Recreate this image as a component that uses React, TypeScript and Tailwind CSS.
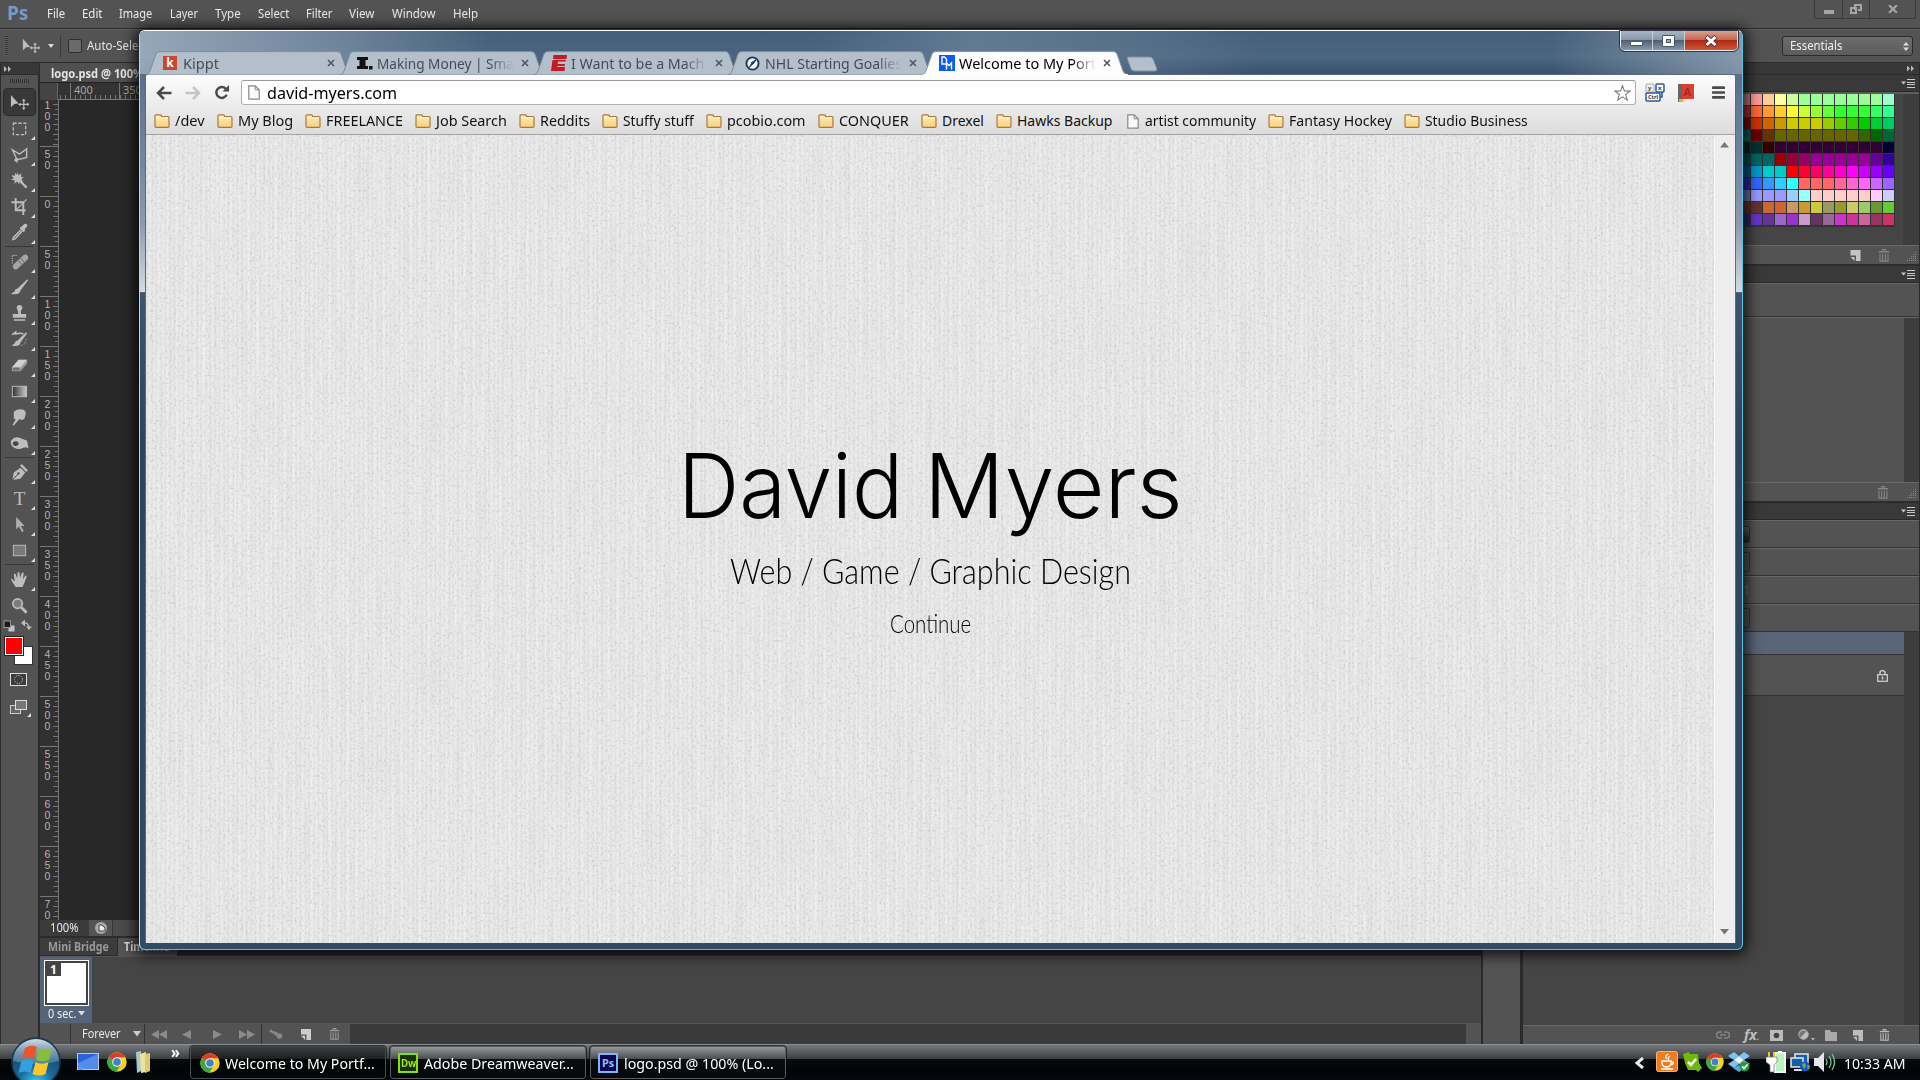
import React, { useLayoutEffect, useRef, useState } from "react";

/* Text squeezed or stretched horizontally to an exact width. */
function Fit({ w, className = "", children }: { w: number; className?: string; children: React.ReactNode }) {
  const ref = useRef<HTMLSpanElement>(null);
  const [s, setS] = useState(1);
  useLayoutEffect(() => {
    if (ref.current) setS(w / ref.current.offsetWidth);
  }, [w]);
  return (
    <span className={`block shrink-0 whitespace-nowrap ${className}`} style={{ width: w }}>
      <span ref={ref} className="inline-block origin-left" style={{ transform: `scaleX(${s})` }}>
        {children}
      </span>
    </span>
  );
}

const Chrome = ({ className = "" }: { className?: string }) => (
  <svg viewBox="0 0 20 20" className={className}>
    <circle cx="10" cy="10" r="9.7" fill="#f7d21b" />
    <path d="M10 10 L1.6 5.2 A9.7 9.7 0 0 0 9.4 19.7 L14 12.4Z" fill="#3fa648" />
    <path d="M10 10 L1.6 5.2 A9.7 9.7 0 0 1 18.4 5.3 L10 5.3Z" fill="#dd3b2c" />
    <circle cx="10" cy="10" r="4.8" fill="#f5f5f5" />
    <circle cx="10" cy="10" r="3.8" fill="#4380c8" />
  </svg>
);

const Trash = ({ className = "" }: { className?: string }) => (
  <svg viewBox="0 0 12 14" className={className} fill="none" stroke="currentColor">
    <path d="M4.500 2V.700h3V2M.500 3h11" strokeWidth="1.500" />
    <path d="M1.700 5v8h8.600V5M4.500 5v7.500M7.500 5v7.500" strokeWidth="1.200" />
  </svg>
);
const NewPage = ({ className = "" }: { className?: string }) => (
  <svg viewBox="0 0 11 12" className={className} fill="currentColor">
    <path d="M0 0h11v12H6V6H0z M0 7.5h4.5V12z" />
  </svg>
);
const PanelMenu = () => (
  <svg viewBox="0 0 14 9" className="h-[9px] w-[14px]">
    <path d="M0 2.5h5L2.500 5.500z" fill="#c9c9c9" />
    <path d="M6 .500h8M6 3.500h8M6 5.500h8M6 8.500h8" stroke="#c9c9c9" strokeWidth="1" />
  </svg>
);
const Grip = () => (
  <svg viewBox="0 0 10 10" className="h-[10px] w-[10px]" fill="#858585">
    {[0, 1, 2, 3, 4].map((r) =>
      Array.from({ length: r + 1 }, (_, c) => <rect key={`${r}-${c}`} x={8 - c * 2} y={r * 2} width="1" height="1" />)
    )}
  </svg>
);

/* ---------- Photoshop tool glyphs, 20x20 ---------- */
const G = "#bdbdbd";
const tools: Record<string, React.ReactNode> = {
  move: (<><path d="M1 2v13l3.500-3.500L9 11z" fill={G} /><path d="M14.500 7v10M9.500 12h10" stroke={G} strokeWidth="1.300" /><path d="M12.500 8.500l2-2.500 2 2.500zM12.500 15.500l2 2.500 2-2.500zM11 10l-2.500 2 2.500 2zM18 10l2.500 2-2.500 2z" fill={G} /></>),
  marquee: <rect x="3.500" y="4.500" width="13" height="12" fill="none" stroke={G} strokeWidth="1.400" strokeDasharray="3.500 1.800" />,
  lasso: <path d="M7.500 15.500L2.500 5l7.500 4.500L17.500 4v9l-9.500 2.500q-1.500-2-2.500 0t2.500 0l-1 3" fill="none" stroke={G} strokeWidth="1.500" />,
  wand: (<><path d="M8 1l1 3.500 3-2-.5 3.500 3 .5-2.500 2 2 3-3.500-1-1 3.500-2-3-3 2.500.5-3.500L1 9l3-1.500-2.500-3 3.500.5.500-3 2 2z" fill={G} /><path d="M10.500 10.500l7 7" stroke={G} strokeWidth="2.300" /></>),
  crop: (<><path d="M6 1v13h10.500M1.500 5.500H14V19" stroke={G} strokeWidth="2" fill="none" /><path d="M6 14L17.500 2.500" stroke={G} strokeWidth="1.200" /></>),
  pipette: (<><path d="M11.500 7l-8 8.500-.5 2 2-.5L13 8.500" fill="none" stroke={G} strokeWidth="1.500" /><path d="M10 5l2-1 3-3q3-1 3.500 2l-3 3.500.5 2-2 1z" fill={G} /></>),
  heal: (<><path d="M7 3.500H2.500v9" fill="none" stroke={G} strokeWidth="1.200" strokeDasharray="1.200 1.200" /><path d="M4 13L14 3.500q3-2 4.500.5t-.5 4.500L8 17.500q-3 2-4.500-.5T4 13z" fill="#a5a5a5" /><path d="M8 8.500l5 5M11 6l4 5" stroke="#666" /></>),
  brush: (<><path d="M18.500 2L9 11l1.500 1.500L18.500 2z" stroke={G} strokeWidth="1.500" fill={G} /><path d="M8.500 11q-3 0-3.500 3l-4 2.500q6 1.500 8.500-.5 2-2 1-3.500z" fill={G} /></>),
  stamp: <path d="M10 1a3 3 0 0 1 3 3.500l-1.500 3v3H17v4H3v-4h5.500v-3L7 4.500A3 3 0 0 1 10 1zM4 16h12v1.500H4z" fill={G} />,
  history: (<><path d="M2 5l4-3v2q5-1 8 0M17.500 3L9 11l1.500 1.500z" stroke={G} strokeWidth="1.500" fill={G} /><path d="M8.500 11q-3 0-3.500 3l-3 2.500q6 1 8-1 1.500-2 .5-3z" fill={G} /><path d="M12 16q5 0 5-8" stroke={G} strokeDasharray="1.200 1.500" fill="none" /></>),
  eraser: (<><path d="M9 4h9v4l-7 8H2v-4z" fill="#9a9a9a" /><path d="M9 4h9l-7 8H2z" fill="#d0d0d0" /><path d="M3.500 12h6l.5 3H3z" fill="#707070" /></>),
  gradient: (<><defs><linearGradient id="toolGrad"><stop offset="0" stopColor="#333" /><stop offset="1" stopColor="#ccc" /></linearGradient></defs><rect x="2.500" y="4.500" width="15" height="11" fill="url(#toolGrad)" stroke={G} /></>),
  smudge: <path d="M4 4q3-3 9-2.500 4 .5 3.500 5l-1.500 5-3 1-2-1-6 7-1.500-.5L6 12l-2-1z" fill={G} />,
  dodge: (<><path d="M1 7q4-5 9-3l8 3 1.500 8-3-1-4 1q-4 2-8-.5Q0 12 1 7z" fill={G} /><ellipse cx="6" cy="10" rx="3" ry="2.500" fill="#484848" /></>),
  pen: (<><path d="M2.500 18L4 10l7-5 5 5-5 6.500z" fill={G} /><path d="M2.500 18l6-6.500" stroke="#444" /><circle cx="9" cy="11" r="1.200" fill="#444" /><path d="M11.500 2l6.500 6.500" stroke={G} strokeWidth="2.500" /></>),
  type: <text x="10" y="17" textAnchor="middle" fontFamily="Liberation Serif, serif" fontSize="20" fill={G}>T</text>,
  arrow: <path d="M6.500 2v13l3-3 3 6 2-1-3-5.500h4z" fill="#b0b0b0" />,
  rect: <rect x="3.500" y="4.500" width="13" height="11" fill="#7a7a7a" stroke={G} />,
  hand: <path d="M6 18l-3.500-5L1 9.500q1.500-1 3 2L5 12 4 4.500Q5 3 6 4.500L7.500 9 8 2.500q1-1 2 0l.5 6L12.500 3q1.500-1 2 .5L13.500 10l2.500-4q1.500-.5 1.500 1L15 14l-2 4z" fill={G} />,
  zoom: (<><circle cx="8" cy="8" r="5" fill="#7d7d7d" stroke={G} strokeWidth="1.800" /><path d="M12 12l5.500 5.500" stroke={G} strokeWidth="3" /></>),
};

function Tool({ name, active = false }: { name: string; active?: boolean }) {
  return (
    <div className={`relative flex h-[26px] w-[31px] items-center justify-center ${active ? "rounded-[3px] bg-[#383838] outline outline-[#2b2b2b]" : ""}`}>
      <svg viewBox="0 0 20 20" className="mr-px h-[19px] w-[19px]">{tools[name]}</svg>
      {!active && name !== "zoom" && (
        <svg viewBox="0 0 4 4" className="absolute right-0 bottom-[1px] h-[4px] w-[4px]"><path d="M4 0v4H0z" fill="#ddd" /></svg>
      )}
    </div>
  );
}
const Sep = ({ className = "h-[3px]" }: { className?: string }) => (
  <div className={`flex w-[29px] items-center ${className}`}><div className="h-px w-full bg-[#383838]" /></div>
);

function Toolbar() {
  return (
    <div className="flex w-[39px] shrink-0 flex-col border-l border-[#2c2c2c] bg-[#2c2c2c]">
      <div className="flex h-[11px] w-[38px] items-center bg-[#383838] pl-[3px]">
        <svg viewBox="0 0 8 6" className="h-[6px] w-[8px]" fill="#bbb"><path d="M0 0l3 3-3 3zM4 0l3 3-3 3z" /></svg>
      </div>
      <div className="mt-px flex w-[37px] flex-1 flex-col items-center bg-[#535353] pt-[4px]">
        <div className="mb-[6px] h-[4px] w-[20px] bg-[repeating-linear-gradient(90deg,#2d2d2d_0_1px,#5a5a5a_1px_2px)]" />
        <div className="flex flex-col items-center">
          <Tool name="move" active /><Tool name="marquee" /><Tool name="lasso" /><Tool name="wand" /><Tool name="crop" /><Tool name="pipette" />
          <Sep />
          <Tool name="heal" /><Tool name="brush" /><Tool name="stamp" /><Tool name="history" /><Tool name="eraser" /><Tool name="gradient" /><Tool name="smudge" /><Tool name="dodge" />
          <Sep />
          <Tool name="pen" /><Tool name="type" /><Tool name="arrow" /><Tool name="rect" />
          <Sep />
          <Tool name="hand" /><Tool name="zoom" />
        </div>
        <svg viewBox="0 0 36 106" className="h-[106px] w-[36px] -translate-x-[1px]">
          <rect x="7.500" y="7.500" width="6" height="6" fill="#c4c4c4" />
          <rect x="3" y="3" width="6.500" height="6.500" fill="#1a1a1a" stroke="#999" />
          <path d="M22 5q6-1 6 6" fill="none" stroke={G} strokeWidth="1.300" />
          <path d="M24 1.500v7L20 5zM25 8.500h6L28 12z" fill={G} />
          <rect x="13.500" y="28.500" width="18" height="18" fill="#fff" stroke="#333" />
          <rect x="3.500" y="18.500" width="19" height="19" fill="#fff" stroke="#222" />
          <rect x="5" y="20" width="16" height="16" fill="#f00" />
          <rect x="9.500" y="55.500" width="16" height="12" fill="#3c3c3c" stroke="#ddd" />
          <circle cx="17.500" cy="61.500" r="4" fill="none" stroke="#ddd" strokeDasharray="1 1.300" />
          <rect x="9.500" y="87.500" width="10" height="8" fill="#666" stroke="#ccc" />
          <rect x="14.500" y="82.500" width="11" height="9" fill="#777" stroke="#ddd" />
          <path d="M30 97v4h-4z" fill="#ddd" transform="translate(0,-2)" />
        </svg>
      </div>
    </div>
  );
}

const rulerLabels = ["100", "50", "0", "50", "100", "150", "200", "250", "300", "350", "400", "450", "500", "550", "600", "650", "70"];

function DocumentArea() {
  return (
    <div className="flex h-[873px] flex-col bg-[#282828]">
      <div className="flex h-[19px] items-center bg-[#3a3a3a]">
        <div className="flex h-full w-[190px] items-center border-r border-[#222] bg-[#4f4f4f] pt-[2px] pl-[11px] text-[12px] leading-[16px] font-bold text-[#e4e4e4]">
          <Fit w={170}>logo.psd @ 100% (Logo, RGB/8)</Fit>
        </div>
      </div>
      <div className="flex h-[18px] border-t border-[#222] bg-[#333]">
        <div className="h-full w-[18px] border-r border-[#666] bg-[#444]" />
        <div className="flex h-full w-[110px] flex-col border-b border-[#777] text-[11px] leading-[13px] text-[#a8a8a8]">
          <div className="flex h-full bg-[repeating-linear-gradient(90deg,#777_0_1px,transparent_1px_5px)] bg-[length:100%_4px] bg-[position:2px_100%] bg-no-repeat pl-[12px]">
            <div className="h-full w-[50px] border-l border-[#777] pl-[3px]">400</div>
            <div className="h-full w-[50px] border-l border-[#777] pl-[3px]">350</div>
          </div>
        </div>
      </div>
      <div className="flex min-h-0 flex-1">
        <div className="flex w-[19px] flex-col overflow-hidden border-r border-[#777] bg-[#313131]">
          {rulerLabels.map((l, i) => (
            <div key={i} className={`flex shrink-0 justify-between border-[#777] ${i === 0 ? "h-[46px]" : i === 16 ? "h-[24px] border-t pt-px" : "h-[50px] border-t pt-px"}`}>
              <div className={`ml-[3px] flex w-[9px] flex-col items-center font-['Liberation_Sans',sans-serif] text-[10.500px] leading-[11px] text-[#b4b4b4] ${i === 0 ? "mt-0" : "mt-[1px]"}`}>
                {l.split("").map((c, j) => <div key={j} className="h-[11px]">{c}</div>)}
              </div>
              <div className={`w-[5px] bg-[repeating-linear-gradient(180deg,transparent_0_8px,#777_8px_9px,transparent_9px_10px)] ${i === 0 ? "mt-[-4px]" : ""}`}>
                <div className="ml-[2px] h-full w-[3px] bg-[repeating-linear-gradient(180deg,transparent_0_3px,#777_3px_4px,transparent_4px_5px)]" />
              </div>
            </div>
          ))}
        </div>
      </div>
      <div className="flex h-[16px] bg-[#4b4b4b] text-[12px] text-[#e8e8e8]">
        <div className="flex w-[49px] items-center bg-[#3b3b3b] pl-[10px]"><Fit w={29}>100%</Fit></div>
        <div className="flex w-[24px] items-center justify-center border-r border-[#333] bg-[#535353]">
          <svg viewBox="0 0 12 12" className="h-[12px] w-[12px]"><circle cx="6" cy="6" r="6" fill="#aaa" /><path d="M4 3h3l3 3v3H4z" fill="#eee" stroke="#444" /></svg>
        </div>
      </div>
    </div>
  );
}

const Tri = ({ d, w = 9 }: { d: string; w?: number }) => (
  <svg viewBox={`0 0 ${w} 9`} width={w} height="9" className="shrink-0" fill="#8b8b8b"><path d={d} /></svg>
);

function Timeline() {
  return (
    <div className="flex flex-1 flex-col bg-[#454545]">
      <div className="flex h-[20px] bg-[#2c2c2c] pt-[2px] text-[12px] font-bold">
        <div className="flex h-[17px] w-[78px] items-center border-r border-[#2a2a2a] bg-[#3c3c3c] pl-[8px] text-[#9a9a9a]"><Fit w={61}>Mini Bridge</Fit></div>
        <div className="flex h-[18px] w-[59px] items-center bg-[#535353] pl-[6px] text-[#d8d8d8]"><Fit w={46}>Timeline</Fit></div>
      </div>
      <div className="flex h-[67px] border-t border-[#555] bg-[#454545]">
        <div className="flex w-[52px] flex-col items-center bg-[#56647a] pt-[3px]">
          <div className="h-[46px] w-[45px] border border-white bg-[#444] p-[2px] pb-[2px]">
            <div className="flex h-full w-full items-start bg-white"><div className="flex h-[13px] w-[14px] items-center justify-center bg-[#444] text-[12px] font-bold text-white">1</div></div>
          </div>
          <div className="flex items-center gap-[2px] text-[12px] leading-[15px] text-[#eee]"><Fit w={28}>0 sec.</Fit><svg viewBox="0 0 7 5" className="h-[5px] w-[7px]"><path d="M0 0h7L3.500 4.500z" fill="#ddd" /></svg></div>
        </div>
      </div>
      <div className="flex h-[21px] border-t border-[#555] bg-[#3a3a3a]">
        <div className="w-[30px] bg-[#535353]" />
        <div className="flex w-[75px] items-center border-x border-[#333] bg-[#535353] pl-[11px] text-[12px] text-[#e8e8e8]">
          <Fit w={39}>Forever</Fit>
          <svg viewBox="0 0 8 6" className="ml-[12px] h-[6px] w-[8px]"><path d="M0 0h8L4 5.500z" fill="#ccc" /></svg>
        </div>
        <div className="flex w-[117px] items-center border-r border-[#333] bg-[#535353] px-[6px]">
          <Tri w={16} d="M8 0v9L0 4.500zM16 0v9L8 4.500z" />
          <div className="w-[15px]" /><Tri d="M9 0v9L0 4.500z" />
          <div className="w-[22px]" /><Tri d="M0 0v9L9 4.500z" />
          <div className="w-[17px]" /><Tri w={16} d="M0 0v9l8-4.500zM8 0v9l8-4.500z" />
        </div>
        <div className="flex w-[88px] items-center gap-[18px] bg-[#535353] pl-[7px]">
          <svg viewBox="0 0 14 10" className="h-[10px] w-[14px]" fill="#888"><circle cx="2" cy="2" r="1.500" /><circle cx="4.500" cy="3.300" r="1.500" /><circle cx="7" cy="4.700" r="2" /><circle cx="10.500" cy="7" r="2.800" /></svg>
          <NewPage className="h-[11px] w-[10px] text-[#ccc]" />
          <Trash className="h-[12px] w-[11px] text-[#999]" />
        </div>
        <div className="flex-1" />
        <div className="w-[15px] bg-[#535353]" />
      </div>
      <div className="flex-1 bg-[#2a2a2a]" />
    </div>
  );
}

const A = "#99ff99";
const swatches: string[][] = [
  ["#c07575", "#ff9999", "#ffcc99", "#ffff99", "#ccff99", A, A, A, A, A, A, A, "#99ffcc"],
  ["#b02525", "#ff6633", "#ff9933", "#ffcc33", "#ffff33", "#ccff33", "#99ff33", "#66ff33", "#33ff33", "#33ff33", "#33ff33", "#33ff66", "#33ff99"],
  ["#800000", "#cc3300", "#cc6600", "#cc9900", "#cccc00", "#cccc00", "#cccc00", "#99cc00", "#66cc00", "#33cc00", "#00cc00", "#00cc33", "#00cc66"],
  ["#005a55", "#660000", "#663300", "#666600", "#666600", "#666600", "#666600", "#666600", "#666600", "#666600", "#336600", "#006600", "#006633"],
  ["#002525", "#003333", "#330000", "#330033", "#330033", "#330033", "#330033", "#330033", "#330033", "#330033", "#330033", "#330033", "#000033"],
  ["#004a48", "#006666", "#006666", "#990000", "#990033", "#990066", "#990099", "#990099", "#990099", "#990099", "#990099", "#660099", "#330099"],
  ["#00508a", "#0099cc", "#00cccc", "#00cccc", "#ff0000", "#ff0033", "#ff0066", "#ff0099", "#ff00cc", "#ff00ff", "#cc00ff", "#9900ff", "#6600ff"],
  ["#2525a8", "#3366ff", "#3399ff", "#33ccff", "#33ffff", "#ff6666", "#ff6666", "#ff6666", "#ff6699", "#ff66cc", "#ff66ff", "#cc66ff", "#9966ff"],
  ["#6c6cb0", "#9999ff", "#9999ff", "#9999ff", "#99ccff", "#99ffff", "#ffcccc", "#ffcccc", "#ffcccc", "#ffcccc", "#ffcccc", "#ffccff", "#ccccff"],
  ["#662525", "#663333", "#cc6633", "#cc6633", "#cc9966", "#cc9933", "#cccc33", "#999966", "#999933", "#cccc66", "#99cc66", "#669933", "#66cc33"],
  ["#252566", "#6633cc", "#663399", "#9966cc", "#9933cc", "#cc99cc", "#663366", "#996699", "#cc33cc", "#cc3399", "#cc6699", "#993366", "#cc3366"],
];

const PanelHead = () => (
  <div className="flex h-[17px] items-center justify-end border-b border-[#2a2a2a] bg-[#393939] pr-[4px]"><PanelMenu /></div>
);

function RightDock() {
  return (
    <div className="flex w-[397px] shrink-0 flex-col border-r border-[#2a2a2a] bg-[#2c2c2c]">
      <div className="flex h-[11px] items-center justify-end bg-[#383838] pr-[4px]">
        <svg viewBox="0 0 8 6" className="h-[7px] w-[8px]" fill="#bbb"><path d="M0 0l3 3-3 3zM4 0l3 3-3 3z" /></svg>
      </div>
      <div className="mt-px"><PanelHead /></div>
      <div className="flex h-[153px] justify-end border-t-2 border-[#5c5c5c] bg-[#454545]">
        <div className="mr-[8px] grid h-[133px] grid-cols-[repeat(13,12px)] grid-rows-[repeat(11,12px)] bg-[#333]">
          {swatches.flat().map((c, i) => <div key={i} className="h-[11px] w-[11px]" style={{ backgroundColor: c }} />)}
        </div>
        <div className="w-[16px] bg-[#3d3d3d]" />
      </div>
      <div className="flex h-[19px] items-center justify-end border-t border-[#686868] bg-[#535353] pr-[2px]">
        <NewPage className="mr-[17px] h-[11px] w-[11px] text-[#c4c4c4]" /><Trash className="mr-[17px] h-[13px] w-[12px] text-[#858585]" /><div className="self-end pb-[2px]"><Grip /></div>
      </div>
      <div className="mt-[2px]"><PanelHead /></div>
      <div className="h-[34px] border-t border-b border-[#686868] border-b-[#333] bg-[#535353]" />
      <div className="flex h-[165px] justify-end border-t border-[#686868] bg-[#535353]"><div className="w-[15px] bg-[#3d3d3d]" /></div>
      <div className="flex h-[19px] items-center justify-end border-t border-[#686868] bg-[#535353] pr-[2px]">
        <Trash className="mr-[18px] h-[13px] w-[12px] text-[#858585]" /><div className="self-end pb-[2px]"><Grip /></div>
      </div>
      <div className="mt-[2px]"><PanelHead /></div>
      {[0, 1, 2, 3].map((i) => (
        <div key={i} className="flex h-[28px] items-center border-t border-b border-[#686868] border-b-[#333] bg-[#535353] pl-[212px]">
          {i === 2 ? <span className="pl-[8px] text-[12px] text-[#777]">1</span> : <div className={`w-[15px] rounded-[2px] border border-[#333] ${i === 0 ? "h-[17px] bg-gradient-to-b from-[#666] to-[#222]" : "h-[20px]"}`} />}
        </div>
      ))}
      <div className="flex min-h-0 flex-1">
        <div className="flex flex-1 flex-col bg-[#454545]">
          <div className="h-[23px] border-b border-[#333] bg-[#586477]" />
          <div className="flex h-[41px] items-center justify-end border-b border-[#333] bg-[#535353] pr-[16px]">
            <svg viewBox="0 0 11 13" className="h-[13px] w-[11px]"><path d="M3 6V3q2.500-3 5 0v3" fill="none" stroke="#ccc" strokeWidth="1.500" /><rect x=".7" y="5.700" width="9.600" height="6.600" fill="#555" stroke="#ccc" strokeWidth="1.300" /><rect x="4.800" y="7.500" width="1.500" height="3" fill="#ccc" /></svg>
          </div>
        </div>
        <div className="w-[15px] bg-[#3d3d3d]" />
      </div>
      <div className="flex h-[19px] items-center justify-end border-t border-[#686868] bg-[#535353] pr-[29px] text-[#bdbdbd]">
        <svg viewBox="0 0 14 8" className="mr-[14px] h-[8px] w-[14px]" fill="none" stroke="#858585" strokeWidth="1.500"><path d="M6 1H3.500a3 3 0 0 0 0 6H6M8 1h2.500a3 3 0 0 1 0 6H8M4 4h6" /></svg>
        <span className="mr-[8px] w-[18px] text-[14px] leading-none font-bold italic">fx<span className="text-[9px]">.</span></span>
        <svg viewBox="0 0 13 11" className="mr-[15px] h-[11px] w-[13px]"><path d="M0 0h13v11H0z" fill="#bbb" /><circle cx="6.500" cy="5.500" r="2.800" fill="#444" /></svg>
        <svg viewBox="0 0 17 12" className="mr-[10px] h-[12px] w-[17px]"><circle cx="5.500" cy="5.500" r="4.700" fill="#bbb" stroke="#bbb" /><path d="M2.300 8.700L8.700 2.300Q4 0 2 3.500T2.300 8.700z" fill="#777" /><path d="M13 9h4l-2 2.500z" fill="#bbb" /></svg>
        <svg viewBox="0 0 12 11" className="mr-[16px] h-[11px] w-[12px]"><path d="M0 0h5l1 2h6v9H0z" fill="#aaa" /></svg>
        <NewPage className="mr-[16px] h-[11px] w-[10px]" />
        <Trash className="h-[12px] w-[11px]" />
      </div>
    </div>
  );
}

const menus: [string, number][] = [["File", 18], ["Edit", 20], ["Image", 33], ["Layer", 28], ["Type", 26], ["Select", 31], ["Filter", 26], ["View", 25], ["Window", 44], ["Help", 25]];

function Photoshop() {
  return (
    <div className="flex h-[1044px] flex-col bg-[#2c2c2c] font-['Noto_Sans',sans-serif]">
      <div className="flex h-[28px] shrink-0 bg-[#535353]">
        <Fit w={21} className="ml-[7px] text-[20px] leading-[26px] font-bold text-[#719ccd]">Ps</Fit>
        <div className="ml-[19px] flex gap-[17.200px] text-[12px] leading-[27px] text-[#ececec]">
          {menus.map(([m, w]) => <Fit key={m} w={w}>{m}</Fit>)}
        </div>
        <div className="mr-[4px] ml-auto flex h-[19px] w-[102px] rounded-b-[3px] border border-t-0 border-[#3b3b3b]">
          <div className="flex w-[28px] items-center justify-center border-r border-[#3b3b3b]"><div className="mt-[5px] h-[4px] w-[10px] bg-[#a5a5a5]" /></div>
          <div className="flex w-[27px] items-center justify-center border-r border-[#3b3b3b]">
            <svg viewBox="0 0 12 10" className="h-[10px] w-[12px]" fill="none" stroke="#a5a5a5" strokeWidth="2"><path d="M5 6V1h6v5H8M1 4h5v5H1z" /></svg>
          </div>
          <div className="flex flex-1 items-center justify-center"><svg viewBox="0 0 10 8" className="h-[8px] w-[10px]"><path d="M1 0l8 8M9 0L1 8" stroke="#a5a5a5" strokeWidth="2.200" /></svg></div>
        </div>
      </div>
      <div className="mt-px flex h-[33px] shrink-0 items-center border-t border-[#626262] bg-[#535353] pl-[5px]">
        <div className="h-[20px] w-[3px] bg-[repeating-linear-gradient(180deg,#333_0_1px,#606060_1px_2px)]" />
        <svg viewBox="0 0 20 20" className="ml-[14px] h-[18px] w-[18px]">{tools.move}</svg>
        <svg viewBox="0 0 6 4" className="ml-[8px] h-[4px] w-[6px]"><path d="M0 0h6L3 4z" fill="#ddd" /></svg>
        <div className="ml-[6px] h-[23px] w-px bg-[#3b3b3b]" />
        <div className="ml-[7px] h-[14px] w-[14px] rounded-[2px] border border-[#2e2e2e] bg-[#6a6a6a]" />
        <Fit w={64} className="ml-[5px] text-[12px] leading-[16px] text-[#e6e6e6]">Auto-Select:</Fit>
        <div className="mr-[7px] ml-auto flex h-[20px] w-[131px] items-center justify-between rounded-[3px] border border-[#2b2b2b] bg-gradient-to-b from-[#6c6c6c] to-[#5c5c5c] pr-[3px] pl-[7px] text-[12px] text-[#f0f0f0]">
          <Fit w={52}>Essentials</Fit>
          <svg viewBox="0 0 6 9" className="h-[9px] w-[6px]" fill="#ddd"><path d="M0 3.500h6L3 0zM0 5.500h6L3 9z" /></svg>
        </div>
      </div>
      <div className="mt-px flex min-h-0 flex-1">
        <Toolbar />
        <div className="flex w-[1444px] shrink-0 flex-col border-r-2 border-l border-[#2a2a2a]">
          <DocumentArea />
          <Timeline />
        </div>
        <div className="mr-[2px] w-[38px] shrink-0 border-r border-[#2a2a2a] bg-[#535353]" />
        <RightDock />
      </div>
    </div>
  );
}

/* ---------- Browser ---------- */
const Folder = () => (
  <svg viewBox="0 0 16 14" className="h-[14px] w-[16px] shrink-0">
    <defs><linearGradient id="folderFill" x1="0" y1="0" x2="0" y2="1"><stop offset="0" stopColor="#ffeebb" /><stop offset="1" stopColor="#f8cf7e" /></linearGradient></defs>
    <path d="M1 12.500V2Q1 .8 2 .8h4.500Q7.500.8 7.500 2.500H14q1 0 1 1v9q0 .8-1 .8H2q-1 0-1-.8z" fill="url(#folderFill)" stroke="#a9793a" strokeWidth="1.200" />
    <path d="M2 4h12" stroke="#fff5d0" />
  </svg>
);
const Page = () => (
  <svg viewBox="0 0 12 15" className="h-[15px] w-[12px] shrink-0"><path d="M.8.800h6.400l4 4v9.400H.8z" fill="#fafafa" stroke="#888" strokeWidth="1.200" /><path d="M7.200.800v4h4" fill="none" stroke="#888" /></svg>
);

const favicons: Record<string, React.ReactNode> = {
  kippt: <div className="flex h-[14px] w-[14px] items-center justify-center bg-[#cc452c] text-[12px] leading-[14px] font-bold text-white">k</div>,
  making: <svg viewBox="0 0 16 14" className="h-[14px] w-[16px]"><path d="M0 1h11v3H8.500v6H11v3H0v-3h2.500V4H0z" fill="#111" /><rect x="12" y="10" width="3.500" height="3.500" fill="#111" /></svg>,
  espn: <svg viewBox="0 0 16 16" className="h-[16px] w-[16px]"><path d="M2.500 0H16l-.5 4H2z M1.500 5h13.500l-.3 1.500H7L6.700 9H14l-.4 2H6.300L6 12h8l-.5 4H0z" fill="#c31a22" /><path d="M2 4.500h14" stroke="#bbb" /></svg>,
  nhl: <svg viewBox="0 0 16 16" className="h-[15px] w-[15px]"><circle cx="8" cy="8" r="6.500" fill="#eef2f5" stroke="#1b3a5a" strokeWidth="2" /><path d="M11.500 4l-5 3.500h3l-5 4.500 2.500-4 3-1z" stroke="#1b3a5a" fill="#1b3a5a" /></svg>,
  dm: <svg viewBox="0 0 16 16" className="h-[16px] w-[16px]"><path d="M0 0h16v16H0z" fill="#0a5cf0" /><path d="M3 2h2.500L7.500 4v5H3zM7.500 14.500V8L10 10.500 12.500 8v6.500" fill="none" stroke="#fff" strokeWidth="1.400" /></svg>,
};

const tabs: { icon: string; label: string; w: number; fade: boolean }[] = [
  { icon: "kippt", label: "Kippt", w: 36, fade: false },
  { icon: "making", label: "Making Money | Sma", w: 137, fade: true },
  { icon: "espn", label: "I Want to be a Mach", w: 133, fade: true },
  { icon: "nhl", label: "NHL Starting Goalies", w: 137, fade: true },
  { icon: "dm", label: "Welcome to My Port", w: 137, fade: true },
];

function Tab({ t, active }: { t: (typeof tabs)[number]; active: boolean }) {
  return (
    <div className="relative h-[24px] w-[194px] shrink-0">
      <svg viewBox="0 0 208 24" className="absolute top-0 -left-[5px] h-[24px] w-[208px]">
        <path d="M0 24Q3 23 4 20L10 3Q11 .6 14 .6H191Q194 .6 195 3L201 20Q202 23 206 24z" fill={active ? "#fdfdfd" : "#b4bfcc"} stroke={active ? "#8895a3" : "#7f8d9c"} />
        {active && <path d="M1 24h205" stroke="#fdfdfd" strokeWidth="2" />}
      </svg>
      <div className="relative flex h-full items-center pl-[12px]">
        <div className="w-[19px] shrink-0">{favicons[t.icon]}</div>
        <div className={`w-[139px] pl-[1px] text-[15px] leading-[22px] ${active ? "text-black" : "text-[#464c55]"} ${t.fade ? "[mask-image:linear-gradient(90deg,#000_82%,transparent_99%)]" : ""}`}>
          <Fit w={t.w}>{t.label}</Fit>
        </div>
        <svg viewBox="0 0 8 8" className="ml-[6px] h-[8px] w-[8px]"><path d="M1 1l6 6M7 1L1 7" stroke="#50565c" strokeWidth="1.600" /></svg>
      </div>
    </div>
  );
}

const bookmarks: [string, number][] = [["/dev", 30], ["My Blog", 55], ["FREELANCE", 77], ["Job Search", 71], ["Reddits", 50], ["Stuffy stuff", 71], ["pcobio.com", 79], ["CONQUER", 70], ["Drexel", 42], ["Hawks Backup", 95], ["artist community", 111], ["Fantasy Hockey", 103], ["Studio Business", 103]];

function Texture() {
  return (
    <svg className="absolute inset-0 h-full w-full">
      <filter id="grain" x="0" y="0" width="100%" height="100%">
        <feTurbulence type="fractalNoise" baseFrequency="0.45 0.4" numOctaves="2" seed="4" />
        <feColorMatrix values="0 0 0 0 0.4  0 0 0 0 0.4  0 0 0 0 0.4  1.1 0 0 0 -0.55" />
      </filter>
      <filter id="ribs" x="0" y="0" width="100%" height="100%">
        <feTurbulence type="fractalNoise" baseFrequency="0.22 0.012" numOctaves="1" seed="9" />
        <feColorMatrix values="0 0 0 0 0.4  0 0 0 0 0.4  0 0 0 0 0.4  0.22 0 0 0 -0.08" />
      </filter>
      <rect width="100%" height="100%" filter="url(#ribs)" />
      <rect width="100%" height="100%" filter="url(#grain)" />
    </svg>
  );
}

function Browser() {
  return (
    <div className="absolute top-[30px] left-[139px] flex h-[920px] w-[1604px] flex-col rounded-[6px] border border-t-white border-r-[#57c4e6] border-b-[#35c6f4] border-l-[#c3d3e3] bg-[linear-gradient(180deg,#4c6580_0,#7688a0_15%,#8e9bac_21%,#d3dae2_28.400%,#3c566f_28.500%,#2b445f_45%,#314b67_100%)] pr-[6px] pb-[6px] pl-[5px] font-['Noto_Sans',sans-serif] shadow-[0_1px_14px_4px_rgba(0,0,0,0.8)]">
      <div className="-mr-[6px] -ml-[5px] flex h-[43px] shrink-0 items-end rounded-t-[5px] bg-[linear-gradient(90deg,rgba(175,190,205,0.75)_0,rgba(160,178,195,0.45)_12%,transparent_22%,transparent_42%,rgba(130,150,175,0.45)_52%,rgba(110,130,155,0.4)_62%,transparent_70%,transparent_88%,rgba(160,175,190,0.7)_100%),linear-gradient(180deg,#455e79,#4b6681_60%,#37506c)] pl-[11px]">
        <div className="relative flex h-[24px] translate-y-px">
          {tabs.map((t, i) => <Tab key={t.label} t={t} active={i === 4} />)}
        </div>
        <svg viewBox="0 0 32 16" className="mb-[2px] ml-[5px] h-[16px] w-[32px]"><path d="M1 2Q1 1 3 1H24Q26 1 27 3L31 13Q31 15 29 15H8Q6 15 5 13z" fill="#b4bfcc" stroke="#7f8d9c" /></svg>
        <div className="mr-[4px] ml-auto flex h-[20px] w-[118px] self-start overflow-hidden rounded-b-[5px] border border-t-0 border-[#e5ecf2] outline outline-[#334]">
          <div className="flex w-[32px] items-center justify-center border-r border-[#c5d0da] bg-[linear-gradient(180deg,#a9b6c4,#8594a5_50%,#4f6073_50%,#8799ab)]"><div className="mt-[5px] h-[5px] w-[13px] rounded-[1px] border border-[#4a5563] bg-white" /></div>
          <div className="flex w-[32px] items-center justify-center border-r border-[#c5d0da] bg-[linear-gradient(180deg,#a9b6c4,#8594a5_50%,#4f6073_50%,#8799ab)]">
            <div className="flex h-[12px] w-[13px] items-center justify-center rounded-[1px] border border-[#4a5563] bg-white"><div className="h-[4px] w-[5px] border border-[#4a5563] bg-[#9ab]" /></div>
          </div>
          <div className="flex flex-1 items-center justify-center bg-[linear-gradient(180deg,#d9a196,#c4614c_50%,#a92a10_50%,#d2553a)]">
            <svg viewBox="0 0 14 12" className="h-[12px] w-[14px]"><path d="M2 1.500l10 9M12 1.500l-10 9" stroke="#533" strokeWidth="4.500" /><path d="M2.500 2l9 8M11.500 2l-9 8" stroke="#fff" strokeWidth="3" /></svg>
          </div>
        </div>
      </div>
      <div className="flex min-h-0 flex-1 flex-col overflow-hidden rounded-t-[3px] border border-b-0 border-[#596b7d] bg-[#e8e8e8]">
        <div className="flex h-[60px] shrink-0 flex-col border-b border-[#a5a5a5] bg-gradient-to-b from-[#fdfdfd] to-[#dcdcdc]">
          <div className="flex h-[35px] items-center pl-[10px]">
            <svg viewBox="0 0 16 14" className="h-[14px] w-[16px]" fill="none" stroke="#4a4a4a" strokeWidth="2.500"><path d="M8 1L2 7l6 6M2 7h13.500" /></svg>
            <svg viewBox="0 0 16 14" className="ml-[13px] h-[14px] w-[16px]" fill="none" stroke="#c5c5c5" strokeWidth="2.500"><path d="M8 1l6 6-6 6M14 7H.500" /></svg>
            <svg viewBox="0 0 16 16" className="ml-[13px] h-[15px] w-[16px]" fill="none" stroke="#4a4a4a" strokeWidth="2.600"><path d="M13 10.500A5.800 5.800 0 1 1 12 4" /><path d="M15.500 0v7H8.500z" fill="#4a4a4a" stroke="none" /></svg>
            <div className="ml-[11px] flex h-[25px] w-[1395px] items-center rounded-[3px] border border-[#b0b0b0] border-t-[#999] bg-white pr-[4px] pl-[6px]">
              <Page />
              <Fit w={130} className="ml-[7px] text-[16px] leading-[22px] text-black">david-myers.com</Fit>
              <svg viewBox="0 0 18 18" className="ml-auto h-[18px] w-[17px]"><path d="M9 1.200l2 5.600 6 .2-4.700 3.600 1.700 5.900L9 13l-5 3.500 1.700-5.900L1 7l6-.2z" fill="#fdfdfd" stroke="#777" strokeWidth="1.100" /></svg>
            </div>
            <svg viewBox="0 0 20 19" className="ml-[9px] h-[19px] w-[20px]"><rect x="1" y="1" width="8" height="8" rx="1" fill="#eee" stroke="#aab" /><rect x="11" y="1" width="8" height="8" rx="1" fill="#fff" stroke="#2d5999" strokeWidth="1.500" /><rect x="1" y="10" width="14" height="8" rx="1" fill="#fff" stroke="#2d5999" strokeWidth="1.500" /><path d="M17 9v5h-2" stroke="#2d5999" strokeWidth="1.500" fill="none" /><text x="3" y="6.800" fontSize="6" fontWeight="bold" fill="#444">y</text><text x="13" y="6.800" fontSize="6" fontWeight="bold" fill="#234">x</text><text x="3" y="16.200" fontSize="5.500" fontWeight="bold" fill="#234">Ctrl</text></svg>
            <svg viewBox="0 0 16 18" className="ml-[13px] h-[18px] w-[16px]"><path d="M0 0h4v18H0z" fill="#666" /><path d="M4 0h12v16H4z" fill="#dc4030" /><path d="M4 15h12v1.500H4z" fill="#eee" /><path d="M1 15h4v3H1z" fill="#eeb030" /><text x="5.500" y="12" fontSize="11" fontWeight="bold" fill="#a92a20">A</text></svg>
            <svg viewBox="0 0 13 13" className="ml-[18px] h-[13px] w-[13px]"><path d="M1 1.700h11M1 6.500h11M1 11.300h11" stroke="#4a4a4a" strokeWidth="2.700" strokeLinecap="round" /></svg>
          </div>
          <div className="flex h-[22px] items-center gap-[12px] pl-[8px] text-[14px] leading-[20px] text-[#111]">
            {bookmarks.map(([b, w]) => (
              <div key={b} className="flex items-center gap-[5px]">{b === "artist community" ? <div className="pl-[3px] pr-px"><Page /></div> : <Folder />}<Fit w={w}>{b}</Fit></div>
            ))}
          </div>
        </div>
        <div className="flex min-h-0 flex-1">
          <div className="relative flex flex-1 flex-col items-center bg-[repeating-linear-gradient(90deg,#e6e6e6_0_2px,#efefef_3px_4px,#e9e9e9_5px,#e5e5e5_7px,#eeeeee_8px_9px)] pt-[309px] text-black">
            <Texture />
            <div className="relative flex gap-[21px] font-['Inter',sans-serif] text-[89px] leading-[84px] [font-weight:350]">
              <Fit w={225}>David</Fit>
              <Fit w={259}>Myers</Fit>
            </div>
            <Fit w={401} className="relative mt-[20px] font-['Lato',sans-serif] text-[36px] leading-[44px] font-light">Web / Game / Graphic Design</Fit>
            <Fit w={81} className="relative mt-[15px] font-['Lato',sans-serif] text-[25px] leading-[32px] font-light">Continue</Fit>
          </div>
          <div className="flex w-[21px] flex-col items-center justify-between border-l border-[#fafafa] bg-[#eeeeee] pt-[7px] pr-px pb-[8px]">
            <svg viewBox="0 0 9 6" className="h-[6px] w-[9px]"><path d="M4.500 0L9 5.500H0z" fill="#777" /></svg>
            <svg viewBox="0 0 9 6" className="h-[6px] w-[9px]"><path d="M4.500 5.500L9 0H0z" fill="#777" /></svg>
          </div>
        </div>
      </div>
    </div>
  );
}

/* ---------- Taskbar ---------- */
function TaskButton({ icon, label, active = false }: { icon: React.ReactNode; label: string; active?: boolean }) {
  return (
    <div className={`flex h-[33px] w-[196px] items-center rounded-[3px] border pl-[9px] outline outline-black/60 ${active ? "border-[#4a4e52] bg-[linear-gradient(180deg,#3a3c3e,#1d1f21_38%,#020304_40%,#060809)]" : "border-[#5a5e62] bg-[linear-gradient(180deg,#96989a,#4c4f52_38%,#0a0c0f_40%,#05080c)]"}`}>
      {icon}
      <Fit w={150} className="ml-[5px] text-[15px] leading-[20px] text-white">{label}</Fit>
    </div>
  );
}

function StartOrb() {
  return (
    <svg viewBox="0 0 50 50" className="absolute -top-[8px] left-[11px] h-[50px] w-[50px]">
      <defs>
        <radialGradient id="orb" cx="0.5" cy="0.95" r="0.8"><stop offset="0" stopColor="#3fd0f5" /><stop offset="0.45" stopColor="#1a6a9c" /><stop offset="1" stopColor="#1b4060" /></radialGradient>
        <linearGradient id="orbShine" x1="0" y1="0" x2="0" y2="1"><stop offset="0" stopColor="#e4f0f6" stopOpacity="0.9" /><stop offset="1" stopColor="#8fb4c9" stopOpacity="0.35" /></linearGradient>
      </defs>
      <circle cx="25" cy="25" r="24" fill="url(#orb)" stroke="#163a50" strokeWidth="1.500" />
      <path d="M2 24A23 22 0 0 1 48 24Q25 30 2 24z" fill="url(#orbShine)" />
      <path d="M14 11q6-4 12-1l-3 12q-6-3-12 0z" fill="#e8562a" />
      <path d="M28 11q6 3 13 0l-3 12q-6 3-13 0z" fill="#86bd3b" />
      <path d="M10.500 24q6-3 12 0L19.500 36q-6-3-12 0z" fill="#35a0e0" />
      <path d="M24.500 25q6 3 13 0l-3 12q-6 3-13 0z" fill="#fcc62e" />
    </svg>
  );
}

function Taskbar() {
  return (
    <div className="relative flex h-[36px] items-center border-t border-[#8c9093] bg-[linear-gradient(180deg,#74787b,#3b3f42_39%,#070b0f_41%,#020407_70%,#04080c)] pl-[77px] font-['Noto_Sans',sans-serif]">
      <StartOrb />
      <svg viewBox="0 0 22 18" className="h-[18px] w-[22px] -translate-y-px"><rect x=".5" y=".5" width="21" height="16" fill="#2c62d8" stroke="#b9c9d9" /><path d="M1 10L21 1v15H1z" fill="#6fa6f5" opacity=".6" /><rect x="2" y="14" width="4" height="3" fill="#3bb0e0" /></svg>
      <Chrome className="ml-[8px] h-[20px] w-[20px] -translate-y-px" />
      <svg viewBox="0 0 15 22" className="ml-[9px] h-[22px] w-[15px] -translate-y-px"><path d="M0 1l5-1v20l-4 2z" fill="#a6c8cf" /><path d="M4 3l6-2v20l-5 1z" fill="#efe2a0" /><path d="M9 3l5-1v18l-5 2z" fill="#e0c868" /></svg>
      <Fit w={9} className="ml-[20px] self-start text-[16px] leading-[14px] font-bold text-white">»</Fit>
      <div className="ml-[10px] flex gap-[4px]">
        <TaskButton active icon={<Chrome className="h-[20px] w-[20px]" />} label="Welcome to My Portf..." />
        <TaskButton icon={<div className="-ml-[2px] mr-[1px] flex h-[20px] w-[20px] items-center justify-center border-2 border-[#8ade12] bg-[#183005] text-[11px] leading-[14px] font-bold text-[#9be622]"><Fit w={15}>Dw</Fit></div>} label="Adobe Dreamweaver..." />
        <TaskButton icon={<div className="-ml-[2px] mr-[1px] flex h-[20px] w-[20px] items-center justify-center border-2 border-[#7cb8f5] bg-[#0a0550] text-[11px] leading-[14px] font-bold text-[#84c0ff]"><Fit w={12}>Ps</Fit></div>} label="logo.psd @ 100% (Lo..." />
      </div>
      <div className="mr-[15px] ml-auto flex items-center">
        <svg viewBox="0 0 9 12" className="mr-[12px] h-[12px] w-[9px]"><path d="M8 1L2 6l6 5" fill="none" stroke="#e8eaee" strokeWidth="3" /></svg>
        <svg viewBox="0 0 22 21" className="h-[21px] w-[22px] -translate-y-px"><rect x=".5" y=".5" width="21" height="20" rx="2" fill="#ef7d1c" stroke="#f7b474" /><path d="M12 3q-4 3-1 5M14 5q-3 2-1 4" stroke="#fff" fill="none" strokeWidth="1.300" /><path d="M6 10h9v3q-1 3-4.500 3T6 13zM15 11q3-.5 2 2l-3 1M5 18h12" stroke="#fff" strokeWidth="1.300" fill="none" /></svg>
        <svg viewBox="0 0 20 20" className="ml-[4px] h-[20px] w-[20px] -translate-y-px"><path d="M1 2l6-2 1 2h8l1 9 3 5-4 4-2-2H6l-3-7z" fill="#6fb80e" /><path d="M6 10l3 3 5-6" stroke="#fff" strokeWidth="2.500" fill="none" /></svg>
        <Chrome className="ml-[4px] h-[18px] w-[18px] -translate-y-px" />
        <svg viewBox="0 0 22 20" className="ml-[4px] h-[20px] w-[22px] -translate-y-px"><path d="M6 0l5 4-5 4-6-4zM16 0l6 4-6 4-5-4zM6 8l5 4-5 4-6-4zM16 8l6 4-6 4-5-4z" fill="#7cc4f4" /><path d="M11 4l5 4-5 4-5-4z" fill="#e4f3fd" /><path d="M5 16l6-3 6 3-6 4z" fill="#53a9e8" /><circle cx="16.500" cy="14.500" r="5" fill="#23963a" /><path d="M14 14.500l2 2 3.500-4" stroke="#fff" strokeWidth="1.800" fill="none" /></svg>
        <svg viewBox="0 0 20 22" className="ml-[16px] h-[22px] w-[20px] -translate-y-px"><rect x="9" y="2" width="10" height="19" fill="#b8f3c0" stroke="#f4f4f4" strokeWidth="2" /><rect x="12" y="0" width="4" height="2" fill="#fff" /><path d="M3 1v5M8 1v5" stroke="#f0c030" strokeWidth="2" /><path d="M0 6h11v5l-3 3v7H4v-7l-4-3z" fill="#fff" stroke="#777" strokeWidth=".7" /></svg>
        <svg viewBox="0 0 20 19" className="ml-[4px] h-[19px] w-[20px]"><rect x="5" y="1" width="13" height="10" fill="#1360a8" stroke="#e5e9ee" strokeWidth="1.500" /><rect x="1" y="5" width="12" height="9" fill="#1360a8" stroke="#e5e9ee" strokeWidth="1.500" /><path d="M4 17h8" stroke="#ddd" strokeWidth="2" /><circle cx="15" cy="13.500" r="5" fill="#234fc4" /><path d="M12 11l3-1 1 3-2 3zM17 12l3 1-2 4z" fill="#4cc44c" /></svg>
        <svg viewBox="0 0 22 20" className="ml-[4px] h-[20px] w-[22px] -translate-y-px"><path d="M0 6h4l6-6v20l-6-6H0z" fill="#e5e5ee" /><path d="M12 7q2 3 0 6M15 4q4 6 0 12M18 2q5 8 0 16" stroke="#6fcf90" strokeWidth="1.300" fill="none" /></svg>
        <Fit w={61} className="ml-[8px] text-[15px] leading-[20px] text-white">10:33 AM</Fit>
      </div>
    </div>
  );
}

export default function App() {
  return (
    <div className="relative h-[1080px] w-[1920px] overflow-hidden bg-black">
      <Photoshop />
      <Browser />
      <Taskbar />
    </div>
  );
}
